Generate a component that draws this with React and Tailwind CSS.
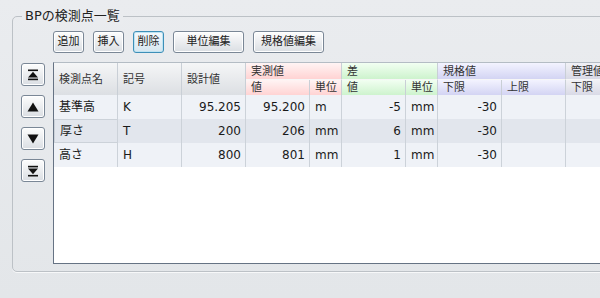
import React from "react";

const FONT = { fontFamily: '"DejaVu Sans", "Noto Sans CJK JP", sans-serif' };

function Btn({ children, w, active }) {
  return (
    <div
      className={
        "h-[22px] flex items-center justify-center rounded-[3px] border text-[11px] text-[#222] " +
        (active
          ? "border-[#3d8fb8] bg-gradient-to-b from-[#f4fafd] to-[#d6e6ef] shadow-[inset_0_0_0_1px_#bfe3f2]"
          : "border-[#7a8796] bg-gradient-to-b from-[#fdfdfd] to-[#dadee3] shadow-[inset_0_0_0_1px_#ffffff]")
      }
      style={{ width: w }}
    >
      {children}
    </div>
  );
}

function NavBtn({ kind }) {
  const icons = {
    top: (
      <svg width="12" height="12" viewBox="0 0 12 12">
        <rect x="1" y="0.5" width="10" height="1.6" fill="#111" />
        <path d="M6 2.8 L11 8.6 L1 8.6 Z" fill="#111" />
        <rect x="1" y="9.6" width="10" height="1.6" fill="#111" />
      </svg>
    ),
    up: (
      <svg width="12" height="12" viewBox="0 0 12 12">
        <path d="M6 1.5 L11.5 10.5 L0.5 10.5 Z" fill="#111" />
      </svg>
    ),
    down: (
      <svg width="12" height="12" viewBox="0 0 12 12">
        <path d="M0.5 1.5 L11.5 1.5 L6 10.5 Z" fill="#111" />
      </svg>
    ),
    bottom: (
      <svg width="12" height="12" viewBox="0 0 12 12">
        <rect x="1" y="0.8" width="10" height="1.6" fill="#111" />
        <path d="M1 3.4 L11 3.4 L6 9.2 Z" fill="#111" />
        <rect x="1" y="9.9" width="10" height="1.6" fill="#111" />
      </svg>
    ),
  };
  return (
    <div className="w-[24px] h-[23px] flex items-center justify-center rounded-[3px] border border-[#7a8796] bg-gradient-to-b from-[#fdfdfd] to-[#dadee3] shadow-[inset_0_0_0_1px_#ffffff]">
      {icons[kind]}
    </div>
  );
}

const rows = [
  { name: "基準高", sym: "K", design: "95.205", meas: "95.200", unit: "m", diff: "-5", dunit: "mm", lo: "-30" },
  { name: "厚さ", sym: "T", design: "200", meas: "206", unit: "mm", diff: "6", dunit: "mm", lo: "-30", sel: true },
  { name: "高さ", sym: "H", design: "800", meas: "801", unit: "mm", diff: "1", dunit: "mm", lo: "-30" },
];

const widths = [64, 64, 64, 64, 32, 64, 32, 64, 64, 64, 64];

export default function App() {
  const gray = "bg-gradient-to-b from-[#f5f6f7] to-[#dcdfe3]";
  const pink = "bg-gradient-to-b from-[#fff4f4] to-[#ffd3d3]";
  const green = "bg-gradient-to-b from-[#f2fff2] to-[#cdf3cd]";
  const lav = "bg-gradient-to-b from-[#f3f3ff] to-[#d3d4f3]";
  const mgr = "bg-gradient-to-b from-[#f1f1f6] to-[#d9dae6]";
  const hcell = "border-r border-[#c9cfd6] flex items-center pl-[5px] text-[11px] text-[#333] leading-none";

  return (
    <div
      className="w-[600px] h-[298px] overflow-hidden bg-gradient-to-b from-[#eaecef] to-[#e3e6e9]"
      style={FONT}
    >
      <div className="pt-[16px] pl-[12px]">
        <div className="relative w-[700px] h-[256px] border border-[#bcc1c6] rounded-[5px] shadow-[0_1px_0_#f7f8f9]">
          <div className="absolute left-[9px] top-[-9px] px-[3px] bg-[#eaecef] text-[13px] leading-[16px] text-[#222]">
            BPの検測点一覧
          </div>
          <div className="flex gap-[9px] pl-[40px] pt-[14px]">
            <Btn w={31}>追加</Btn>
            <Btn w={31}>挿入</Btn>
            <Btn w={31} active>削除</Btn>
            <Btn w={71}>単位編集</Btn>
            <Btn w={71}>規格値編集</Btn>
          </div>
          <div className="flex gap-[8px] pl-[8px] pt-[9px]">
            <div className="flex flex-col gap-[9px] pt-[1px]">
              <NavBtn kind="top" />
              <NavBtn kind="up" />
              <NavBtn kind="down" />
              <NavBtn kind="bottom" />
            </div>
            <div className="w-[640px] h-[202px] bg-white border-l border-b border-t border-l-[#667384] border-b-[#667384] border-t-[#b4bcc4]">
              <div
                className="grid"
                style={{ gridTemplateColumns: widths.map((w) => w + "px").join(" "), gridTemplateRows: "17px 15px" }}
              >
                <div className={hcell + " row-span-2 " + gray}>検測点名</div>
                <div className={hcell + " row-span-2 " + gray}>記号</div>
                <div className={hcell + " row-span-2 " + gray}>設計値</div>
                <div className={hcell + " col-span-2 border-b border-b-[#f6f6f6] " + pink}>実測値</div>
                <div className={hcell + " col-span-2 border-b border-b-[#f6f6f6] " + green}>差</div>
                <div className={hcell + " col-span-2 border-b border-b-[#f6f6f6] " + lav}>規格値</div>
                <div className={hcell + " col-span-2 border-b border-b-[#f6f6f6] " + mgr}>管理値</div>
                <div className={hcell + " " + pink}>値</div>
                <div className={hcell + " pl-[4px] " + pink}>単位</div>
                <div className={hcell + " " + green}>値</div>
                <div className={hcell + " pl-[4px] " + green}>単位</div>
                <div className={hcell + " " + lav}>下限</div>
                <div className={hcell + " " + lav}>上限</div>
                <div className={hcell + " " + mgr}>下限</div>
                <div className={hcell + " " + mgr}>上限</div>
              </div>
              {rows.map((r, i) => {
                const bg = i % 2 === 1 ? "bg-[#e2e6ed]" : "bg-[#eff2f7]";
                const c = "h-[24px] border-r border-[#ccd2d9] flex items-center text-[12px] text-[#1a1a1a] leading-none";
                return (
                  <div
                    key={i}
                    className={"grid " + bg}
                    style={{ gridTemplateColumns: widths.map((w) => w + "px").join(" ") }}
                  >
                    <div className={c + " text-[11px] pl-[5px] " + (r.sel ? "border border-[#5bb9cc] pl-[4px]" : "")}>{r.name}</div>
                    <div className={c + " pl-[5px]"}>{r.sym}</div>
                    <div className={c + " justify-end pr-[4px]"}>{r.design}</div>
                    <div className={c + " justify-end pr-[4px]"}>{r.meas}</div>
                    <div className={c + " pl-[5px]"}>{r.unit}</div>
                    <div className={c + " justify-end pr-[4px]"}>{r.diff}</div>
                    <div className={c + " pl-[5px]"}>{r.dunit}</div>
                    <div className={c + " justify-end pr-[4px]"}>{r.lo}</div>
                    <div className={c}></div>
                    <div className={c}></div>
                    <div className={c}></div>
                  </div>
                );
              })}
            </div>
          </div>
        </div>
      </div>
    </div>
  );
}
